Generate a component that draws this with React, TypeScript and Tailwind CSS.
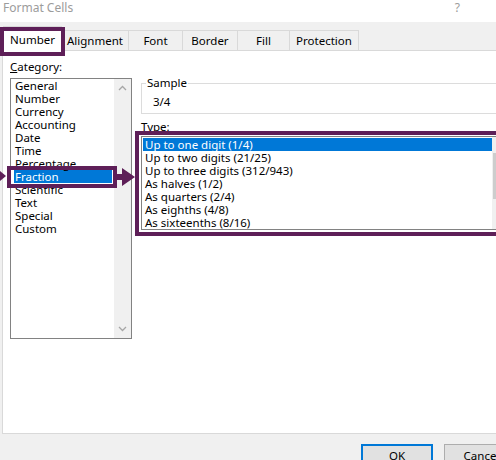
import React from 'react';

const categories = ['General', 'Number', 'Currency', 'Accounting', 'Date', 'Time', 'Percentage', 'Fraction', 'Scientific', 'Text', 'Special', 'Custom'];
const types = [
  'Up to one digit (1/4)',
  'Up to two digits (21/25)',
  'Up to three digits (312/943)',
  'As halves (1/2)',
  'As quarters (2/4)',
  'As eighths (4/8)',
  'As sixteenths (8/16)',
];
const tabs = ['Alignment', 'Font', 'Border', 'Fill', 'Protection'];

function Chevron({ up }: { up?: boolean }) {
  return (
    <svg width="9" height="6" viewBox="0 0 9 6" className="block">
      <path d={up ? 'M1 5 L4.5 1.5 L8 5' : 'M1 1 L4.5 4.5 L8 1'} fill="none" stroke="#a6a6a6" strokeWidth="1.3" />
    </svg>
  );
}

export default function App() {
  return (
    <div className="relative w-[496px] h-[460px] overflow-hidden bg-[#f0f0f0] text-[11.5px] text-black font-['Noto_Sans',sans-serif] leading-[13px]">
      {/* title bar */}
      <div className="h-[22px] bg-white flex items-start pt-[1px] pl-[3px] pr-[36px] text-[12px] leading-[14px] text-[#9c9c9c]">
        <span>Format Cells</span>
        <span className="ml-auto">?</span>
      </div>

      {/* tab strip */}
      <div className="h-[28px] flex items-end pl-[3px]">
        <div className="w-[59px] h-[25px] bg-white border border-b-0 border-[#d9d9d9] flex items-center justify-center relative top-[1px] z-10">Number</div>
        {tabs.map((t) => (
          <div
            key={t}
            className={`h-[20px] -ml-px bg-[#f0f0f0] border border-b-0 border-[#d9d9d9] flex items-center justify-center ${
              t === 'Alignment' ? 'w-[68px]' : t === 'Font' ? 'w-[55px]' : t === 'Border' ? 'w-[56px]' : t === 'Fill' ? 'w-[53px]' : 'w-[70px]'
            }`}
          >
            {t}
          </div>
        ))}
      </div>

      {/* panel */}
      <div className="ml-[2px] w-[600px] h-[384px] bg-white border border-[#d9d9d9] flex pt-[9px] pl-[7px]">
        {/* category column */}
        <div className="flex flex-col w-[122px]">
          <div className="h-[15px] mb-[3px]"><span className="underline">C</span>ategory:</div>
          <div className="h-[261px] border border-[#828282] flex">
            <div className="flex-1 pl-[3px]">
              {categories.map((c) => (
                <div key={c} className={`h-[13px] flex items-center pl-[1px] ${c === 'Fraction' ? 'bg-[#0078d7] text-white mr-[2px]' : ''}`}>
                  {c}
                </div>
              ))}
            </div>
            <div className="w-[17px] bg-[#f0f0f0] flex flex-col items-center justify-between py-[6px]">
              <Chevron up />
              <Chevron />
            </div>
          </div>
        </div>

        {/* right column */}
        <div className="ml-[9px] flex flex-col w-[420px]">
          <div className="relative mt-[23px] h-[31px] border border-[#dcdcdc] flex items-center pl-[11px]">
            <span className="absolute -top-[8px] left-[4px] bg-white px-[1px]">Sample</span>
            <span className="mt-[6px]">3/4</span>
          </div>
          <div className="mt-[6px] h-[16px]">Type:</div>
          <div className="h-[94px] border border-[#828282] flex">
            <div className="w-[350px] pt-px pl-px">
              {types.map((t, i) => (
                <div key={t} className={`h-[13px] flex items-center pl-[2px] ${i === 0 ? 'bg-[#0078d7] text-white' : ''}`}>
                  {t}
                </div>
              ))}
            </div>
            <div className="w-[17px] bg-[#f0f0f0] pt-[16px]">
              <div className="h-[46px] bg-[#cdcdcd] mx-[1px]" />
            </div>
          </div>
        </div>
      </div>

      {/* bottom buttons */}
      <div className="flex pt-[10px] pl-[361px] gap-[11px]">
        <div className="shrink-0 w-[72px] h-[23px] bg-[#e1e1e1] border-2 border-[#0078d7] flex items-center justify-center">OK</div>
        <div className="shrink-0 w-[75px] h-[23px] bg-[#e1e1e1] border border-[#adadad] flex items-center justify-center">Cancel</div>
      </div>

      {/* annotation overlays */}
      <div className="absolute left-0 top-[27px] w-[65px] h-[29px] border-4 border-[#5e1f58] z-20" />
      <div className="absolute left-[7px] top-[166px] w-[110px] h-[22px] border-4 border-[#5e1f58] z-20" />
      <div className="absolute left-[135px] top-[131px] w-[380px] h-[105px] border-4 border-[#5e1f58] z-20" />
      <svg className="absolute left-0 top-[170px] z-20" width="7" height="12" viewBox="0 0 7 12">
        <path d="M0 1 L6 6 L0 11 Z" fill="#5e1f58" />
      </svg>
      <svg className="absolute left-[116px] top-[167px] z-20" width="20" height="20" viewBox="0 0 20 20">
        <path d="M0 7 L6 7 L6 1 L19 10 L6 19 L6 13 L0 13 Z" fill="#5e1f58" />
      </svg>
    </div>
  );
}
